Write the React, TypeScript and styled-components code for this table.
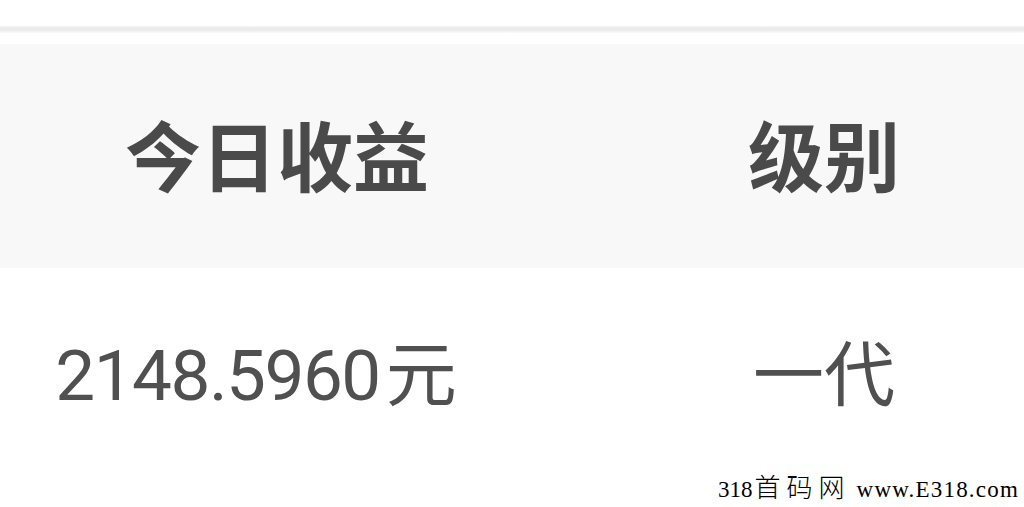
import React from "react";
import styled, { createGlobalStyle } from "styled-components";

const Global = createGlobalStyle`
  html, body { margin: 0; padding: 0; background: #ffffff; overflow: hidden; }
  body { width: 1024px; height: 507px; }
`;

const Page = styled.div`
  position: relative;
  width: 1024px;
  height: 507px;
  background: #ffffff;
  overflow: hidden;
  padding-top: 26px;
  box-sizing: border-box;
`;

const TopRule = styled.div`
  height: 7px;
  background: linear-gradient(#f4f4f4, #e9e9e9 40%, #eeeeee 70%, #fbfbfb);
  margin-bottom: 11px;
`;

const Row = styled.div<{ $head?: boolean }>`
  display: grid;
  grid-template-columns: 554px 540px;
  height: ${(p) => (p.$head ? "224px" : "212px")};
  background: ${(p) => (p.$head ? "#f8f8f8" : "#ffffff")};
  align-items: center;
`;

const HeadCell = styled.div`
  text-align: center;
  font-family: "Noto Sans CJK SC", "Noto Sans", sans-serif;
  font-weight: 700;
  font-size: 76px;
  line-height: 1;
  color: #4a4a4a;
  padding-bottom: 6px;
`;

const ValueCell = styled.div<{ $shift?: number }>`
  text-align: center;
  font-family: Roboto, "Noto Sans CJK SC", sans-serif;
  font-weight: 400;
  font-size: 71px;
  line-height: 1;
  color: #505050;
  padding-right: ${(p) => p.$shift ?? 0}px;
  padding-bottom: 4px;
  white-space: nowrap;
`;

const Digits = styled.span`
  letter-spacing: -1.5px;
`;

const Cjk = styled.span<{ $gap?: number }>`
  font-family: "Noto Sans CJK SC", sans-serif;
  margin-left: ${(p) => p.$gap ?? 0}px;
`;

const Watermark = styled.div`
  position: absolute;
  right: 5px;
  bottom: 4px;
  display: flex;
  align-items: baseline;
  font-family: "Liberation Serif", "Noto Sans CJK SC", serif;
  font-size: 23px;
  line-height: 26px;
  color: #000000;
  white-space: pre;
`;

const MarkNum = styled.span``;

const MarkCjk = styled.span`
  font-family: "Noto Sans CJK SC", sans-serif;
  font-weight: 300;
  font-size: 26px;
  letter-spacing: 6px;
  margin-left: 2px;
  margin-right: 6px;
`;

const MarkUrl = styled.span`
  letter-spacing: 1.2px;
`;

export default function App() {
  return (
    <>
      <Global />
      <Page>
        <TopRule />
        <Row $head>
          <HeadCell>今日收益</HeadCell>
          <HeadCell>级别</HeadCell>
        </Row>
        <Row>
          <ValueCell $shift={42}>
            <Digits>2148.5960</Digits>
            <Cjk $gap={6}>元</Cjk>
          </ValueCell>
          <ValueCell>
            <Cjk>一代</Cjk>
          </ValueCell>
        </Row>
        <Watermark>
          <MarkNum>318</MarkNum>
          <MarkCjk>首码网</MarkCjk>
          <MarkUrl>www.E318.com</MarkUrl>
        </Watermark>
      </Page>
    </>
  );
}
